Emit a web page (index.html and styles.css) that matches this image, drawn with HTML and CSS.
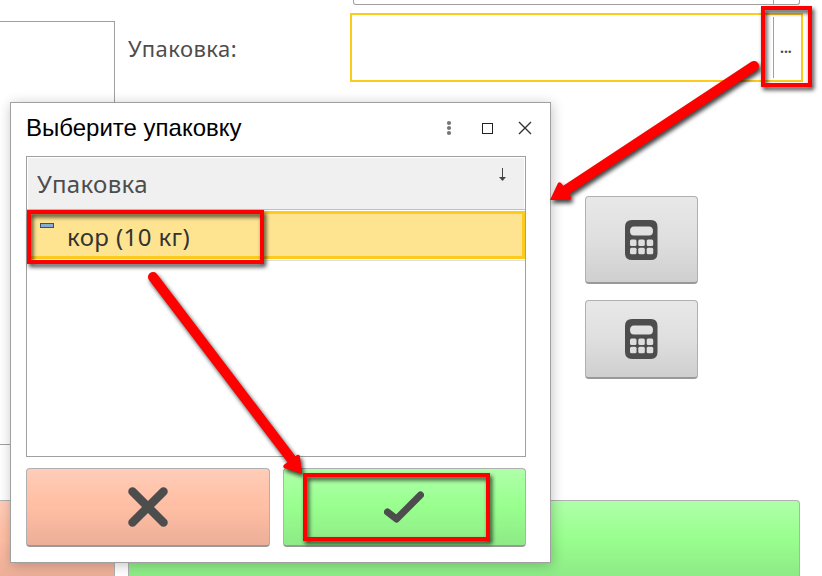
FILE: index.html
```html
<!DOCTYPE html>
<html lang="ru">
<head>
<meta charset="utf-8">
<title>Выберите упаковку</title>
<link rel="stylesheet" href="styles.css">
</head>
<body>
<svg class="defs" width="0" height="0">
  <symbol id="calc" viewBox="0 0 34 40">
    <path fill="#4d4d4d" fill-rule="evenodd" d="M7 0H26Q32.500 0 32.500 7V33Q32.500 40 26 40H7Q0 40 0 33V7Q0 0 7 0ZM9 6.500Q5 6.500 5 11T9 15.500H24Q28 15.500 28 11T24 6.500Z"/>
    <g fill="#dedede"><rect x="5" y="19.500" width="6.500" height="6.500" rx="1.500"/><rect x="13.300" y="19.500" width="6.500" height="6.500" rx="1.500"/><rect x="21.700" y="19.500" width="6.500" height="6.500" rx="1.500"/><rect x="5" y="27.700" width="6.500" height="6.500" rx="1.500"/><rect x="13.300" y="27.700" width="6.500" height="6.500" rx="1.500"/><rect x="21.700" y="27.700" width="6.500" height="6.500" rx="1.500"/></g>
  </symbol>
</svg>
<main class="screen">
  <section class="side">
    <div class="list"></div>
    <button class="btn cancel side-cancel"></button>
  </section>
  <section class="form">
    <div class="prev-field"><i></i></div>
    <div class="row">
      <label>Упаковка:</label>
      <div class="field"><span class="choose">...</span></div>
    </div>
    <div class="tools">
      <button class="btn gray tall"><svg width="34" height="40"><use href="#calc"/></svg></button>
      <button class="btn gray"><svg width="34" height="40"><use href="#calc"/></svg></button>
    </div>
    <button class="btn ok form-ok"></button>
  </section>
</main>

<div class="dialog">
  <header class="titlebar">
    <h1>Выберите упаковку</h1>
    <svg class="controls" width="90" height="20" viewBox="0 0 90 20">
      <g fill="#757575"><circle cx="7" cy="5" r="2.100"/><circle cx="7" cy="10" r="2.100"/><circle cx="7" cy="15" r="2.100"/></g>
      <rect x="40.500" y="5.500" width="10" height="10" fill="none" stroke="#222"/>
      <path d="M77 4L89 16M89 4L77 16" stroke="#333" stroke-width="1.400"/>
    </svg>
  </header>
  <div class="table">
    <div class="thead"><span>Упаковка</span>
      <svg width="8" height="14" viewBox="0 0 8 14"><path d="M3.500 0V10" stroke="#444"/><path d="M0 9H7L3.500 13Z" fill="#444"/></svg>
    </div>
    <div class="trow"><i class="mark"></i><span>кор (10 кг)</span></div>
  </div>
  <footer class="actions">
    <button class="btn cancel"><svg width="40" height="40"><path d="M4.500 4.500L35.500 35.500M35.500 4.500L4.500 35.500" stroke="#4d4d4d" stroke-width="8.500" stroke-linecap="round"/></svg></button>
    <button class="btn ok"><svg class="tick" width="40" height="32"><path d="M3.500 21L12.500 28L36.500 4" fill="none" stroke="#4d4d4d" stroke-width="7" stroke-linecap="round" stroke-linejoin="round"/></svg></button>
  </footer>
</div>

<svg class="notes" width="822" height="576" viewBox="0 0 822 576">
  <g fill="none" stroke="#f00" stroke-width="4">
    <rect x="763" y="8" width="47" height="77"/>
    <rect x="29" y="212" width="233" height="50"/>
    <rect x="305" y="475" width="183" height="64"/>
  </g>
  <g class="arrows">
    <path d="M754 66L566 190M153 277L292 460" stroke="#f00" stroke-width="10" stroke-linecap="round"/>
    <path d="M550 200L558 183Q560 181 562 184L571 197Q572 200 568 200Z" fill="#f00"/>
    <path d="M302 474L284 468Q282 466 285 464L297 455Q300 454 300 457Z" fill="#f00"/>
  </g>
</svg>
</body>
</html>
```
FILE: styles.css
```css
* { box-sizing: border-box; }
body {
  margin: 0;
  width: 822px;
  height: 576px;
  overflow: hidden;
  position: relative;
  background: #fff;
  font-family: "Noto Sans", "Open Sans", sans-serif;
  color: #4d4d4d;
}
.defs { position: absolute; }
.screen { display: grid; grid-template-columns: 115px 672px; gap: 13px; height: 576px; overflow: hidden; }
.side { display: flex; flex-direction: column; padding-top: 21px; }
.list { height: 424px; flex: none; border: 1px solid #a0a0a0; border-left: 0; }
.btn {
  display: flex;
  align-items: center;
  justify-content: center;
  padding: 0;
  border: 1px solid #b0b0b0;
  border-bottom: 2px solid #999;
  border-radius: 4px;
}
.btn svg { display: block; }
.cancel { background: linear-gradient(#ffcdb9, #ffbfa4 45%, #ffbfa4 50%, #ecae98); }
.ok { background: linear-gradient(#afffa9, #98ff8e 50%, #8eea86); }
.gray { background: linear-gradient(#e8e8e8, #dfdfdf 50%, #cfcfcf); height: 79px; }
.gray.tall { height: 88px; }
.side-cancel { flex: none; height: 79px; margin-top: 55px; border-left: 0; border-radius: 0; }
.form { display: flex; flex-direction: column; }
.prev-field {
  flex: none;
  height: 5px;
  margin-left: 225px;
  border: 1px solid #a0a0a0;
  border-top: 0;
  border-radius: 0 0 3px 3px;
  padding-left: 419px;
}
.prev-field i { display: block; height: 4px; width: 1px; background: #a0a0a0; }
.row { display: flex; align-items: flex-start; height: 69px; margin-top: 8px; flex: none; }
.row label { width: 222px; flex: none; padding-top: 20px; font-size: 22px; line-height: 30px; letter-spacing: .45px; }
.field { flex: none; width: 453px; height: 69px; border: 2px solid #fccb1b; padding: 2px 0 2px 421px; }
.choose { display: block; height: 61px; border-left: 1px solid #a0a0a0; padding-left: 6px; font-size: 14px; font-weight: 700; line-height: 62px; }
.tools { display: flex; flex-direction: column; gap: 16px; width: 113px; margin: 114px 0 0 457px; flex: none; }
.form-ok { flex: none; height: 79px; margin-top: 121px; }
.dialog {
  position: absolute;
  left: 10px;
  top: 102px;
  width: 541px;
  height: 461px;
  background: #fff;
  border: 1px solid #a0a0a0;
  box-shadow: 1px 2px 12px rgba(0, 0, 0, .24);
  padding: 0 24px 15px 15px;
}
.titlebar { display: flex; align-items: center; height: 53px; justify-content: space-between; margin-right: -6px; padding-bottom: 3px; }
.titlebar h1 { margin: 0; font: 400 24px/28px "Liberation Sans", sans-serif; color: #000; white-space: nowrap; }
.controls { flex: none; }
.table { height: 301px; border: 1px solid #a0a0a0; padding-top: 1px; }
.thead {
  display: flex;
  justify-content: space-between;
  height: 51px;
  margin: 0 1px;
  padding: 9px 17px 0 9px;
  background: #f0f0f0;
  font-size: 24px;
  line-height: 34px;
  letter-spacing: .35px;
}
.thead svg { margin-top: 1px; }
.trow {
  display: flex;
  height: 48px;
  margin-top: 2px;
  border: 3px solid #fccb1b;
  border-left-width: 2px;
  background: #fee491;
  color: #333;
  font-size: 24px;
  line-height: 46px;
  letter-spacing: .4px;
  box-shadow: 0 1px #fff, 0 2px #e0e0e0, 0 -1px #fff, 0 -2px #c0c0c0;
}
.mark { width: 14px; height: 5px; margin: 9px 13px 0 11px; background: #86add2; border: 1px solid #315577; }
.actions { display: grid; grid-template-columns: 244px 243px; gap: 13px; margin-top: 11px; height: 79px; }
.tick { margin-right: 2px; }
.notes { position: absolute; left: 0; top: 0; filter: drop-shadow(2px 3px 2px rgba(0, 0, 0, .75)); }
```
